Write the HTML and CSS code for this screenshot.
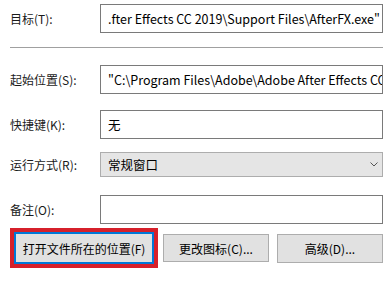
FILE: index.html
```html
<!DOCTYPE html>
<html lang="zh-CN">
<head>
    <meta charset="UTF-8">
    <title>属性 - 快捷方式</title>
    <link rel="stylesheet" href="styles.css">
</head>
<body>
    <div class="panel">
        <!-- Cible -->
        <div class="row row-target">
            <label class="label">目标(T):</label>
            <div class="field">.fter Effects CC 2019\Support Files\AfterFX.exe"</div>
        </div>

        <hr class="sep">

        <div class="row row-start">
            <label class="label">起始位置(S):</label>
            <div class="field">"C:\Program Files\Adobe\Adobe After Effects CC 2019\Support Files"</div>
        </div>

        <div class="row row-key">
            <label class="label">快捷键(K):</label>
            <div class="field">无</div>
        </div>

        <div class="row row-run">
            <label class="label">运行方式(R):</label>
            <div class="field select">
                <span>常规窗口</span>
                <svg class="chevron" width="8" height="5" viewBox="0 0 8 5">
                    <polyline points="0.5,0.5 4,4 7.5,0.5" fill="none" stroke="#555" stroke-width="1"/>
                </svg>
            </div>
        </div>

        <div class="row row-note">
            <label class="label">备注(O):</label>
            <div class="field"></div>
        </div>

        <div class="buttons">
            <div class="highlight">
                <button class="btn btn-focus">打开文件所在的位置(F)</button>
            </div>
            <button class="btn btn-icon">更改图标(C)...</button>
            <button class="btn btn-adv">高级(D)...</button>
        </div>
    </div>
</body>
</html>
```

FILE: styles.css
```css
/* Style global */
body {
    margin: 0;
    background-color: #fff;
    color: #000;
    font-family: 'Noto Sans CJK SC', 'Noto Sans', sans-serif;
    font-size: 12px;
}

.panel {
    padding: 4px 6px 0 10px;
}

/* Lignes */
.row {
    display: flex;
    align-items: center;
}

.label {
    width: 90px;
    flex: none;
    color: #1a1a1a;
}

.field {
    flex: 1;
    height: 27px;
    border: 1px solid #7a7a7a;
    padding: 0 7px;
    display: flex;
    align-items: center;
    white-space: nowrap;
    overflow: hidden;
    font-size: 12.5px;
}

.sep {
    margin: 14px 0 17px;
    border: none;
    border-top: 1px solid #a0a0a0;
}

.row-key {
    margin-top: 16px;
}

.row-run {
    margin-top: 13px;
}

.select {
    height: 23px;
    background-color: #e5e5e5;
    border-color: #adadad;
    justify-content: space-between;
}

.chevron {
    margin-right: -3px;
}

.row-note {
    margin-top: 18px;
}

/* Boutons */
.buttons {
    display: flex;
    align-items: center;
    margin-top: 4px;
}

.highlight {
    border: 4px solid #d6202b;
    margin-right: 5px;
}

.btn {
    height: 29px;
    padding: 0;
    background-color: #e1e1e1;
    border: 1px solid #adadad;
    font-family: inherit;
    font-size: 12px;
    color: #000;
}

.btn-focus {
    width: 140px;
    height: 32px;
    border: 2px solid #0078d7;
    display: block;
}

.btn-icon {
    width: 106px;
    height: 28px;
    margin-right: 8px;
}

.btn-adv {
    width: 106px;
}
```
